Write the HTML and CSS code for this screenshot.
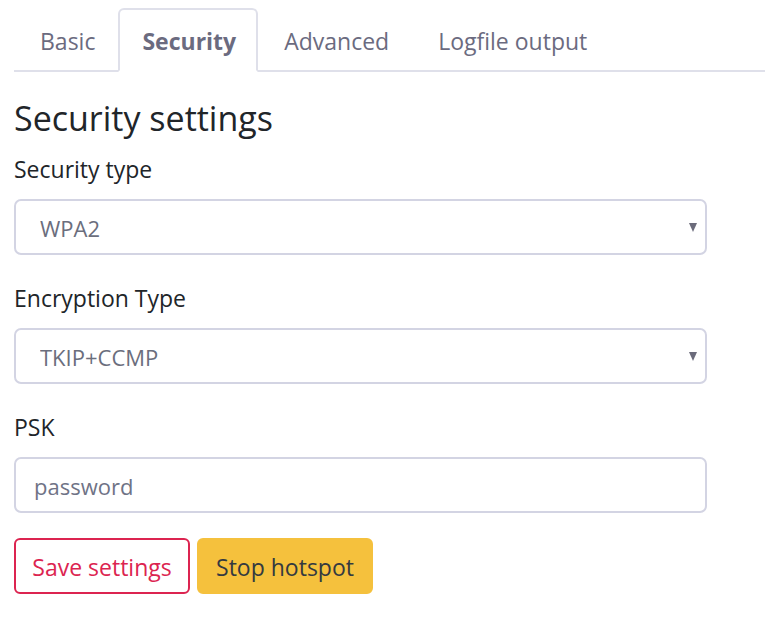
FILE: index.html
```html
<!DOCTYPE html>
<html lang="en">
<head>
<meta charset="utf-8">
<title>Security settings</title>
<link rel="stylesheet" href="styles.css">
</head>
<body>
<div class="page">
  <ul class="tabs">
    <li class="tab">Basic</li>
    <li class="tab active">Security</li>
    <li class="tab">Advanced</li>
    <li class="tab">Logfile output</li>
  </ul>
  <div class="panel">
    <h3 class="title">Security settings</h3>
    <div class="group">
      <label class="label">Security type</label>
      <div class="select-wrap">
        <select class="control select"><option>WPA2</option></select>
      </div>
    </div>
    <div class="group">
      <label class="label">Encryption Type</label>
      <div class="select-wrap">
        <select class="control select"><option>TKIP+CCMP</option></select>
      </div>
    </div>
    <div class="group last">
      <label class="label">PSK</label>
      <input class="control input" type="text" placeholder="password">
    </div>
    <div class="actions">
      <button class="btn btn-save">Save settings</button>
      <button class="btn btn-stop">Stop hotspot</button>
    </div>
  </div>
</div>
</body>
</html>
```
FILE: styles.css
```css
* { box-sizing: border-box; }
html, body { margin: 0; padding: 0; background: #fff; }
body {
  font-family: "Open Sans", "Noto Sans", sans-serif;
  font-size: 23px;
  color: #212529;
}
.page { padding: 8px 0 0 14px; }
.tabs {
  list-style: none;
  margin: 0;
  padding: 0;
  display: flex;
  border-bottom: 2px solid #dfe0ea;
}
.tab {
  padding: 14px 21px 12px 24px;
  border: 2px solid transparent;
  border-radius: 6px 6px 0 0;
  margin-bottom: -2px;
  line-height: 34px;
  color: #6b6b7f;
}
.tab.active {
  border-color: #dfe0ea;
  border-bottom-color: #fff;
  background: #fff;
  font-weight: 700;
  padding-left: 22px;
  padding-right: 20px;
}
.panel { width: 693px; }
.title {
  margin: 26px 0 15px;
  font-size: 34px;
  font-weight: 400;
  line-height: 41px;
  color: #212529;
}
.group { margin-bottom: 28px; }
.group.last { margin-bottom: 25px; }
.label {
  display: block;
  line-height: 30px;
  margin-bottom: 15px;
}
.control {
  display: block;
  width: 100%;
  height: 56px;
  border: 2px solid #d3d4e3;
  border-radius: 7px;
  background: #fff;
  font-family: inherit;
  font-size: 22px;
  color: #6b6e7d;
  outline: none;
}
.select-wrap { position: relative; }
.select-wrap::after {
  content: "";
  position: absolute;
  right: 10px;
  top: 24px;
  border-left: 4.5px solid transparent;
  border-right: 4.5px solid transparent;
  border-top: 9px solid #6b6b7b;
}
.select {
  appearance: none;
  -webkit-appearance: none;
  padding: 2px 30px 0 24px;
}
.input { padding: 2px 18px 0; }
.input::placeholder { color: #6f7386; }
.actions { display: flex; gap: 7px; }
.btn {
  height: 56px;
  width: 176px;
  border-radius: 6px;
  font-family: inherit;
  font-size: 23px;
  padding: 2px 0 0;
}
.btn-save {
  background: #fff;
  border: 2px solid #dc2450;
  color: #dc2450;
}
.btn-stop {
  background: #f5c13d;
  border: 2px solid #f5c13d;
  color: #343a40;
}
```
